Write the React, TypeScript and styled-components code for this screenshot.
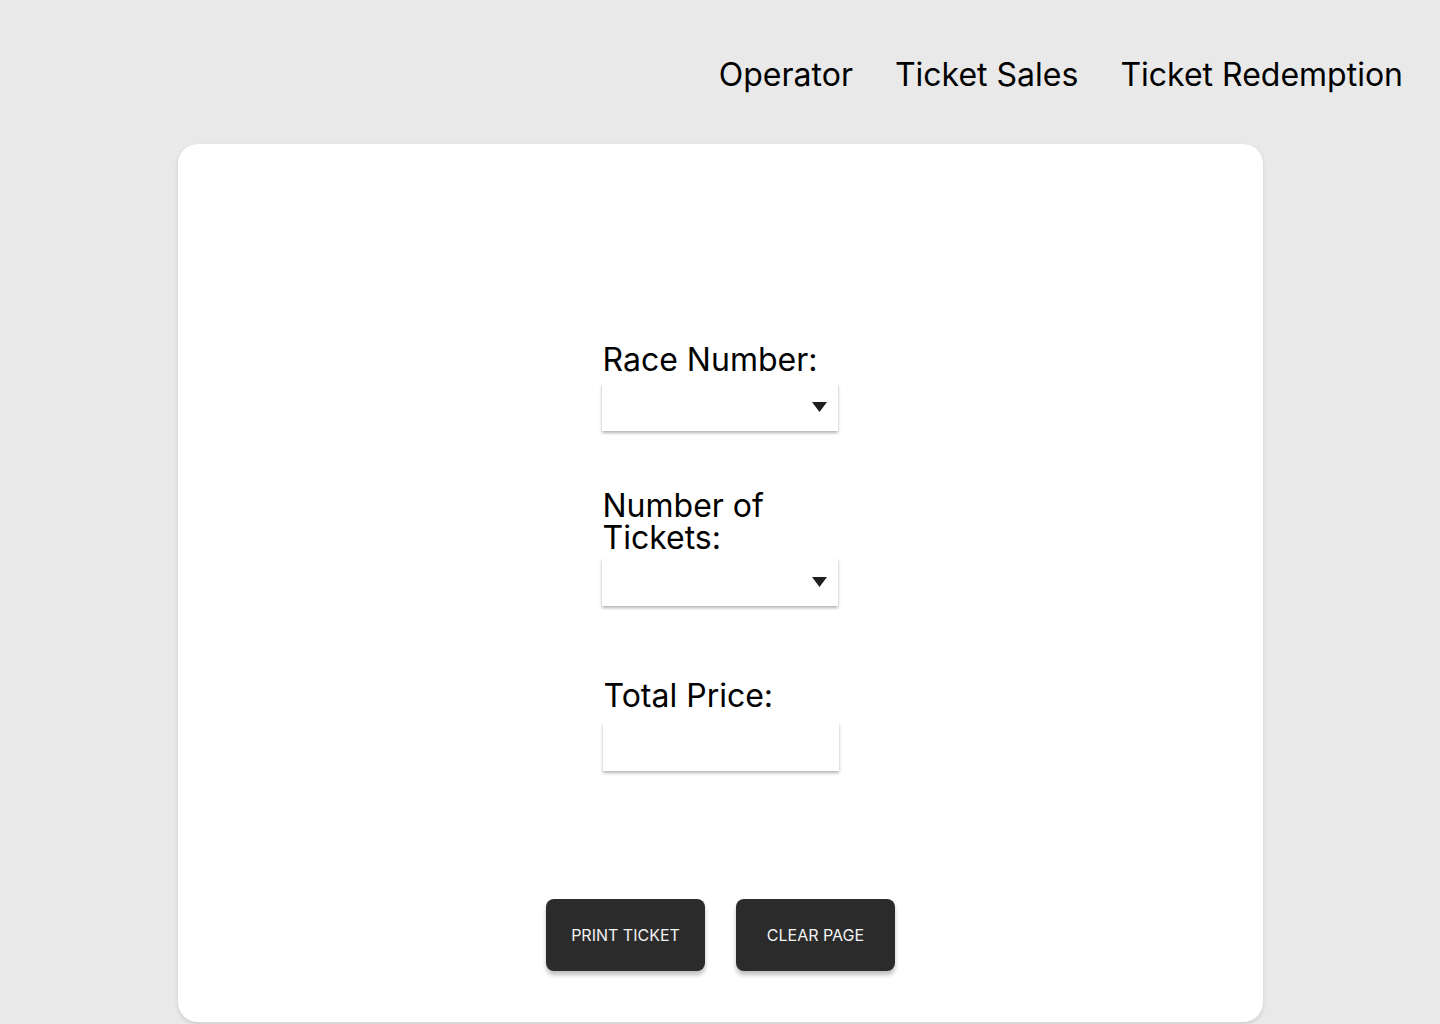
import React from "react";
import styled, {createGlobalStyle} from "styled-components";

const GlobalStyle = createGlobalStyle`
  html, body {
    margin: 0;
    padding: 0;
    background: #E9E9E9;
    font-family: Inter, "Noto Sans", sans-serif;
    color: #000;
  }
  * {
    box-sizing: border-box;
  }
`

type FieldProps = {
   label: string
   top: number
   gap: number
   shift?: number
   children: React.ReactNode
}

const Field: React.FC<FieldProps> = ({label, top, gap, shift = 0, children}) => (
   <FieldBlock $top={top} $shift={shift}>
      <Label $gap={gap}>{label}</Label>
      {children}
   </FieldBlock>
)

const Dropdown: React.FC = () => (
   <SelectWrap>
      <Select defaultValue="">
         <option value=""></option>
      </Select>
      <Arrow width="15" height="10" viewBox="0 0 15 10">
         <path d="M0 0 H15 L7.5 10 Z" fill="#1F1F1F"/>
      </Arrow>
   </SelectWrap>
)

export default function App() {
   return (
      <Page>
         <GlobalStyle/>
         <Nav>
            <NavLink>Operator</NavLink>
            <NavLink>Ticket Sales</NavLink>
            <NavLink>Ticket Redemption</NavLink>
         </Nav>
         <Card>
            <Field label="Race Number:" top={0} gap={7} shift={-1}>
               <Dropdown/>
            </Field>
            <Field label="Number of Tickets:" top={59} gap={4} shift={-1}>
               <Dropdown/>
            </Field>
            <Field label="Total Price:" top={74} gap={11}>
               <PriceBox/>
            </Field>
            <Buttons>
               <Button>Print Ticket</Button>
               <Button>Clear Page</Button>
            </Buttons>
         </Card>
      </Page>
   );
}

const Page = styled.div`
  min-height: 1024px;
  display: flex;
  flex-direction: column;
  align-items: center;
  overflow: hidden;
`
const Nav = styled.nav`
  align-self: stretch;
  display: flex;
  justify-content: flex-end;
  gap: 42px;
  padding: 59px 37px 0 0;
  height: 144px;
`
const NavLink = styled.a`
  font-size: 32px;
  line-height: 32px;
  height: 32px;
  color: #000;
  cursor: pointer;
`
const Card = styled.main`
  width: 1085px;
  height: 878px;
  margin-left: 1px;
  background: #fff;
  border-radius: 20px;
  box-shadow: 0 2px 4px rgba(0, 0, 0, 0.12);
  display: flex;
  flex-direction: column;
  align-items: center;
  padding-top: 200px;
`
const FieldBlock = styled.div<{ $top: number, $shift: number }>`
  width: 236px;
  margin-top: ${p => p.$top}px;
  transform: translateX(${p => p.$shift}px);
  display: flex;
  flex-direction: column;
`
const Label = styled.label<{ $gap: number }>`
  font-size: 32px;
  line-height: 32px;
  padding-left: 1px;
  margin-bottom: ${p => p.$gap}px;
`
const SelectWrap = styled.div`
  position: relative;
  height: 48px;
`
const Select = styled.select`
  appearance: none;
  width: 100%;
  height: 48px;
  border: none;
  border-radius: 0;
  background: #fff;
  box-shadow: 0 2px 3px rgba(0, 0, 0, 0.3);
  font-family: Inter, sans-serif;
  font-size: 18px;
  padding: 0 40px 0 12px;
  outline: none;
`
const Arrow = styled.svg`
  position: absolute;
  right: 11px;
  top: 19px;
  pointer-events: none;
`
const PriceBox = styled.div`
  height: 48px;
  background: #fff;
  box-shadow: 0 2px 3px rgba(0, 0, 0, 0.3);
`
const Buttons = styled.div`
  display: flex;
  gap: 31px;
  margin-top: 128px;
`
const Button = styled.button`
  width: 159px;
  height: 72px;
  border: none;
  border-radius: 8px;
  background: #2B2B2B;
  color: #F2F2F2;
  font-family: Inter, sans-serif;
  font-size: 16px;
  text-transform: uppercase;
  box-shadow: 0 4px 4px rgba(0, 0, 0, 0.25);
  cursor: pointer;
`
